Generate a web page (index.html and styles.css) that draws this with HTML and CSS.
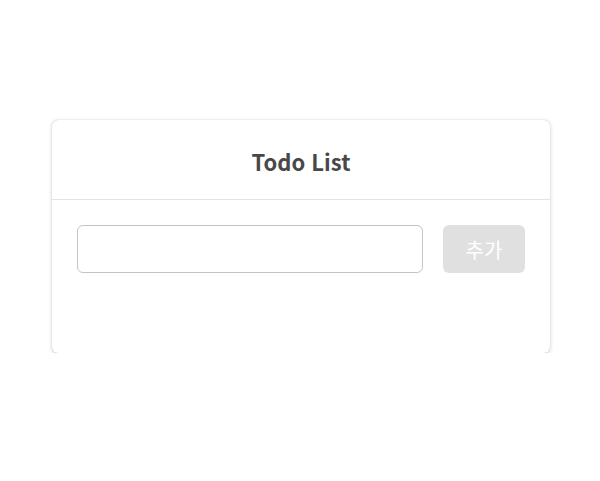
FILE: index.html
```html
<!DOCTYPE html>
<html lang="ko">
<head>
<meta charset="utf-8">
<title>Todo List</title>
<link rel="stylesheet" href="styles.css">
</head>
<body>
<div class="card">
  <div class="card-header">
    <h1 class="title">Todo List</h1>
  </div>
  <div class="card-body">
    <form class="todo-form">
      <input class="todo-input" type="text">
      <button class="add-btn" type="button" disabled>추가</button>
    </form>
  </div>
</div>
</body>
</html>
```
FILE: styles.css
```css
html, body {
  margin: 0;
  padding: 0;
  background: #ffffff;
}
body {
  font-family: "Noto Sans CJK KR", "Noto Sans", sans-serif;
  padding-top: 120px;
}
.card {
  width: 498px;
  margin-left: 52px;
  background: #fff;
  border-radius: 6px;
  box-shadow: 0 0 1px rgba(0,0,0,0.25), 0 1px 4px rgba(0,0,0,0.18);
}
.card-header {
  height: 79px;
  display: flex;
  align-items: center;
  justify-content: center;
  border-bottom: 1px solid #e4e4e4;
}
.title {
  margin: 0;
  font-size: 22px;
  font-weight: 700;
  color: #484848;
  padding-top: 2px;
}
.card-body {
  padding: 25px 25px 80px 25px;
}
.todo-form {
  display: flex;
  gap: 20px;
  margin: 0;
}
.todo-input {
  flex: 1;
  height: 48px;
  box-sizing: border-box;
  border: 1px solid #c4c4c4;
  border-radius: 6px;
  font-size: 18px;
  padding: 0 12px;
  outline: none;
}
.add-btn {
  width: 82px;
  height: 48px;
  border: none;
  border-radius: 6px;
  background: #e0e0e0;
  color: #fff;
  font-family: "Noto Sans CJK KR", sans-serif;
  font-size: 20px;
  padding: 0;
}
```
